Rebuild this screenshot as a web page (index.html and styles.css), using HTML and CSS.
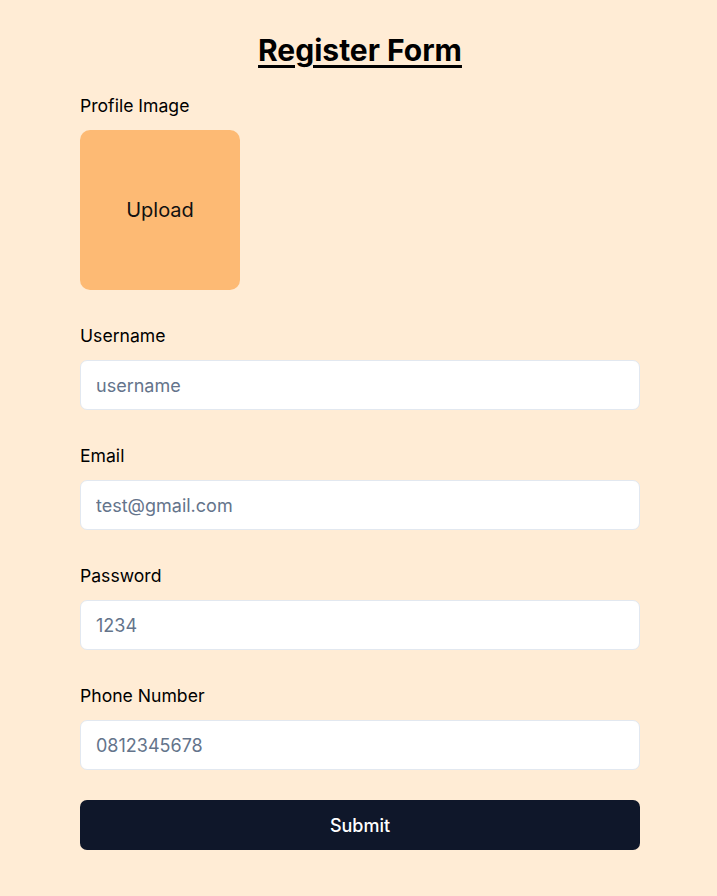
FILE: index.html
```html
<!DOCTYPE html>
<html lang="en">
<head>
<meta charset="utf-8">
<title>Register Form</title>
<link rel="stylesheet" href="styles.css">
</head>
<body>
<main class="page">
  <h1 class="title">Register Form</h1>
  <form class="form">
    <div class="group">
      <label class="label">Profile Image</label>
      <div class="upload">Upload</div>
    </div>
    <div class="group">
      <label class="label" for="username">Username</label>
      <input class="input" id="username" type="text" placeholder="username">
    </div>
    <div class="group">
      <label class="label" for="email">Email</label>
      <input class="input" id="email" type="email" placeholder="test@gmail.com">
    </div>
    <div class="group">
      <label class="label" for="password">Password</label>
      <input class="input" id="password" type="password" placeholder="1234">
    </div>
    <div class="group">
      <label class="label" for="phone">Phone Number</label>
      <input class="input" id="phone" type="text" placeholder="0812345678">
    </div>
    <button class="submit" type="button">Submit</button>
  </form>
</main>
</body>
</html>
```

FILE: styles.css
```css
* { box-sizing: border-box; }
html, body {
  margin: 0;
  background: #ffecd5;
  font-family: Inter, "Noto Sans", sans-serif;
  color: #000;
}
body {
  padding: 0 0 0 3px;
}
.page {
  width: 560px;
  margin: 0 auto;
  padding-top: 32px;
}
.title {
  margin: 0 0 25px;
  text-align: center;
  font-size: 30px;
  line-height: 36px;
  font-weight: 700;
  text-decoration: underline;
  text-underline-offset: 4px;
  text-decoration-thickness: 3px;
}
.form {
  display: flex;
  flex-direction: column;
  gap: 33px;
}
.group {
  display: flex;
  flex-direction: column;
  gap: 12px;
}
.label {
  padding-top: 1px;
  font-size: 17.6px;
  line-height: 24px;
  font-weight: 400;
}
.upload {
  width: 160px;
  height: 160px;
  border-radius: 10px;
  background: #fdba74;
  display: flex;
  align-items: center;
  justify-content: center;
  font-size: 20px;
  color: #111;
}
.input {
  width: 100%;
  height: 50px;
  border: 1px solid #e2e8f0;
  border-radius: 7px;
  background: #fff;
  padding: 0 15px;
  font-family: inherit;
  font-size: 18px;
  color: #0f172a;
  outline: none;
}
.input::placeholder { color: #64748b; }
.submit {
  margin-top: -3px;
  height: 50px;
  width: 100%;
  border: none;
  border-radius: 7px;
  background: #0f172a;
  color: #fff;
  font-family: inherit;
  font-size: 18px;
  font-weight: 500;
  cursor: pointer;
}
```
